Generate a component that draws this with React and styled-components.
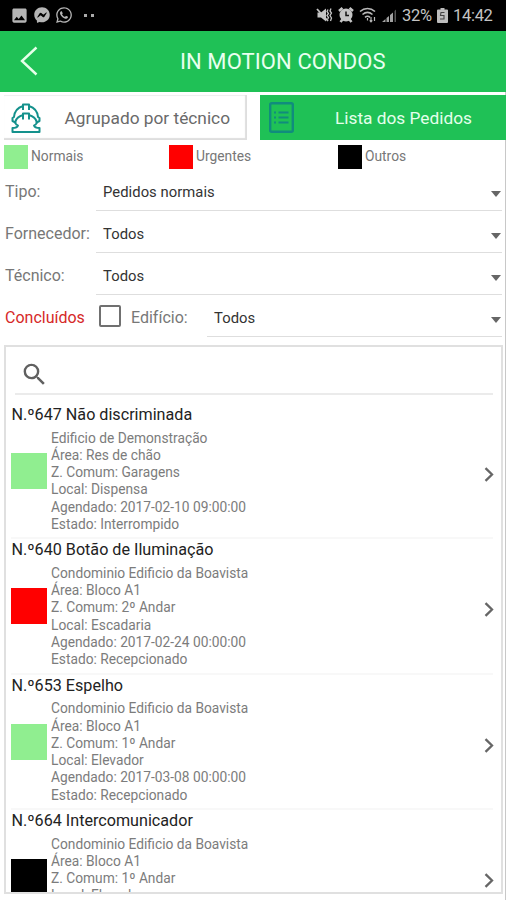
import React from 'react';
import styled, { createGlobalStyle } from 'styled-components';
import { FaFacebookMessenger, FaWhatsapp } from 'react-icons/fa';
import { MdImage, MdSearch } from 'react-icons/md';

const filters = [
  { label: 'Tipo:', value: 'Pedidos normais' },
  { label: 'Fornecedor:', value: 'Todos' },
  { label: 'Técnico:', value: 'Todos' },
];

const requests = [
  {
    title: 'N.º647 Não discriminada',
    color: '#90ee90',
    lines: [
      'Edificio de Demonstração',
      'Área: Res de chão',
      'Z. Comum: Garagens',
      'Local: Dispensa',
      'Agendado: 2017-02-10 09:00:00',
      'Estado: Interrompido',
    ],
  },
  {
    title: 'N.º640 Botão de Iluminação',
    color: '#ff0000',
    lines: [
      'Condominio Edificio da Boavista',
      'Área: Bloco A1',
      'Z. Comum: 2º Andar',
      'Local: Escadaria',
      'Agendado: 2017-02-24 00:00:00',
      'Estado: Recepcionado',
    ],
  },
  {
    title: 'N.º653 Espelho',
    color: '#90ee90',
    lines: [
      'Condominio Edificio da Boavista',
      'Área: Bloco A1',
      'Z. Comum: 1º Andar',
      'Local: Elevador',
      'Agendado: 2017-03-08 00:00:00',
      'Estado: Recepcionado',
    ],
  },
  {
    title: 'N.º664 Intercomunicador',
    color: '#000000',
    lines: [
      'Condominio Edificio da Boavista',
      'Área: Bloco A1',
      'Z. Comum: 1º Andar',
      'Local: Elevador',
    ],
  },
];

function MuteIcon() {
  return (
    <svg width="17" height="17" viewBox="0 0 17 17" fill="none" stroke="#c4c4c4">
      <path d="M1.500 5.500h3.500l5-4v13l-5-4H1.500z" fill="#c4c4c4" stroke="none" />
      <path d="M1 2l11 12" strokeWidth="1.800" />
      <path d="M12 2.500l-1 2 1.500 2-1.500 2 1.500 2-1 2M15 1.500l-1 2.500 1.500 2-1.500 2.500 1.500 2.500-1 3" strokeWidth="1.300" />
    </svg>
  );
}

function AlarmIcon() {
  return (
    <svg width="16" height="16" viewBox="0 0 16 16">
      <path d="M1 4l3.500-3M15 4l-3.500-3M2.500 15l2-2.500M13.500 15l-2-2.500" stroke="#c4c4c4" strokeWidth="2.600" />
      <circle cx="8" cy="8" r="6.500" fill="#c4c4c4" />
      <path d="M8 4.500V8.500h3" fill="none" stroke="#111" strokeWidth="1.500" />
    </svg>
  );
}

function WifiIcon() {
  return (
    <svg width="18" height="16" viewBox="0 0 18 16" fill="none" stroke="#b8b8b8" strokeWidth="1.600">
      <path d="M1 4.500c4.500-4 10.500-4 15 0M3.500 7.500c3-2.500 7-2.500 10 0M6 10.300c1.600-1.300 3.500-1.300 5 0" />
      <path d="M8.500 11v2.500M12 10v4.500M10.700 13.300l1.300 1.500 1.300-1.500M15.500 14v-4" strokeWidth="1.200" />
    </svg>
  );
}

function SignalIcon() {
  return (
    <svg width="15" height="15" viewBox="0 0 15 15">
      <path d="M0 14l3.500-3v3zM4.500 10l2.500-2v6H4.500zM8 7l3-2.500V14H8z" fill="#a2a2a2" />
      <path d="M12.500 3l1.500-1.500V14h-1.500z" fill="#555" />
    </svg>
  );
}

function BatteryIcon() {
  return (
    <svg width="11" height="15" viewBox="0 0 11 15">
      <path d="M3.500 0h4v1.500H10a1 1 0 0 1 1 1V14a1 1 0 0 1-1 1H1a1 1 0 0 1-1-1V2.500a1 1 0 0 1 1-1h2.500z" fill="#bdbdbd" />
      <path d="M7.500 4.500H4l-.5 3h3.500v3.500H3" fill="none" stroke="#444" strokeWidth="1.100" />
    </svg>
  );
}

function HelmetIcon() {
  return (
    <svg width="32" height="32" viewBox="0 0 32 32" fill="none" stroke="#14918c" strokeWidth="2" strokeLinejoin="round">
      {/* outer dome, inner dome, then the brim */}
      <path d="M5.500 20.500L2.500 19v-3l1.500-1C4.500 9.500 8 5.500 13 4V2.500h6V4c5 1.500 8.500 5.500 9 11l1.500 1v3l-3 1.500" />
      <path d="M13 4v4M19 4v4" />
      <path d="M5.500 22v-2.500c1-3.500 4-5.500 7.500-6.500v-1.500h6V13c3.500 1 6.500 3 7.500 6.500V22" />
      <path d="M13 13v4.500M19 13v4.500" />
      <path d="M5.500 22l2.500 1.500c-.5 1.500-2 2.500-5.500 2.500v4h27v-4c-3.500 0-5-1-5.500-2.500l2.500-1.500" />
    </svg>
  );
}

function ListIcon() {
  return (
    <svg width="25" height="31" viewBox="0 0 25 31" fill="none" stroke="#108c7d">
      <rect x="1.200" y="1.200" width="22.600" height="28.600" rx="1.500" strokeWidth="2.400" />
      <path d="M9.500 10.500H19.500M9.500 15.500H19.500M9.500 20.500H19.500" strokeWidth="2" />
      <path d="M5 10.500h2M5 15.500h2M5 20.500h2" strokeWidth="2" />
    </svg>
  );
}

function App() {
  return (
    <Screen>
      <GlobalStyle />
      <StatusBar>
        <StatusBar.Group $gap="5px">
          <MdImage size={19} />
          <FaFacebookMessenger size={16} />
          <FaWhatsapp size={18} />
          <StatusBar.Dots><i /><i /></StatusBar.Dots>
        </StatusBar.Group>
        <StatusBar.Group $gap="5px">
          <MuteIcon />
          <AlarmIcon />
          <WifiIcon />
          <SignalIcon />
          <StatusBar.Text $width="30px">32%</StatusBar.Text>
          <BatteryIcon />
          <StatusBar.Text $width="41px">14:42</StatusBar.Text>
        </StatusBar.Group>
      </StatusBar>

      <Header>
        <svg width="18" height="30" viewBox="0 0 18 30" fill="none" stroke="#e6ffe9" strokeWidth="2.400">
          <path d="M16.500 1.500L2 15l14.500 13.500" />
        </svg>
        <Header.Title>IN MOTION CONDOS</Header.Title>
      </Header>

      <Content>
        <Tabs>
          <Tab>
            <HelmetIcon />
            <Tab.Label>Agrupado por técnico</Tab.Label>
          </Tab>
          <Tab $active>
            <ListIcon />
            <Tab.Label>Lista dos Pedidos</Tab.Label>
          </Tab>
        </Tabs>

        <Legend>
          <Legend.Item><Swatch $color="#90ee90" $size={24} />Normais</Legend.Item>
          <Legend.Item><Swatch $color="#ff0000" $size={24} />Urgentes</Legend.Item>
          <Legend.Item><Swatch $color="#000000" $size={24} />Outros</Legend.Item>
        </Legend>

        {filters.map(({ label, value }) => (
          <FilterRow key={label}>
            <FilterRow.Label>{label}</FilterRow.Label>
            <Select>
              {value}
              <Select.Arrow />
            </Select>
          </FilterRow>
        ))}
        <FilterRow>
          <FilterRow.Done>Concluídos</FilterRow.Done>
          <Checkbox />
          <FilterRow.Building>Edifício:</FilterRow.Building>
          <Select>
            Todos
            <Select.Arrow />
          </Select>
        </FilterRow>

        <RequestList>
          <SearchBar><MdSearch size={29} /></SearchBar>
          {requests.map(({ title, color, lines }) => (
            <Request key={title}>
              <Request.Title>{title}</Request.Title>
              <Request.Body>
                <Swatch $color={color} $size={36} />
                <Request.Lines>
                  {lines.map((line) => <p key={line}>{line}</p>)}
                </Request.Lines>
                <svg width="10" height="15" viewBox="0 0 10 15" fill="none" stroke="#666" strokeWidth="2.300">
                  <path d="M1.500 1.200L8 7.500l-6.500 6.300" />
                </svg>
              </Request.Body>
            </Request>
          ))}
        </RequestList>
      </Content>
    </Screen>
  );
}

const GlobalStyle = createGlobalStyle`
  * {
    box-sizing: border-box;
  }

  body {
    margin: 0;
    background: #fff;
    font-family: Roboto, "Liberation Sans", sans-serif;
  }

  p, h1, h2 {
    margin: 0;
    font-weight: 400;
  }

  svg {
    flex-shrink: 0;
  }
`;

const Screen = styled.div`
  width: 506px;
  height: 900px;
  overflow: hidden;
  display: flex;
  flex-direction: column;
`;

const StatusBar = styled.div`
  height: 30.5px;
  flex-shrink: 0;
  padding: 0 12px 0 10px;
  background: #000;
  color: #b5b5b5;
  display: flex;
  align-items: center;
  justify-content: space-between;
`;

StatusBar.Group = styled.div`
  display: flex;
  align-items: center;
  gap: ${({ $gap }) => $gap};
`;

StatusBar.Dots = styled.div`
  display: flex;
  gap: 4px;
  margin-left: 6px;

  i {
    width: 3px;
    height: 3px;
    background: #aaa;
  }
`;

StatusBar.Text = styled.span`
  width: ${({ $width }) => $width};
  white-space: nowrap;
  font-size: 16.5px;
  letter-spacing: -0.3px;
  color: #c4c4c4;
`;

const Header = styled.header`
  height: 61px;
  flex-shrink: 0;
  padding-left: 20px;
  background: #1fc156;
  display: flex;
  align-items: center;
`;

Header.Title = styled.h1`
  flex: 1;
  padding-left: 142px;
  font-size: 22px;
  letter-spacing: 0.08px;
  color: #e9fff0;
`;

const Content = styled.main`
  flex: 1;
  min-height: 0;
  padding: 3.5px 0 6px 4px;
  border-right: 1px solid #c8c8c8;
  display: flex;
  flex-direction: column;
`;

const Tabs = styled.div`
  height: 45px;
  flex-shrink: 0;
  display: grid;
  grid-template-columns: 243px 1fr;
  gap: 13px;
  margin-right: -1px;
`;

const Tab = styled.div`
  display: flex;
  align-items: center;
  justify-content: space-between;
  padding: ${({ $active }) => ($active ? '0 34px 0 9px' : '0 17px 0 6px')};
  background: ${({ $active }) => ($active ? '#1fc156' : '#fff')};
  color: ${({ $active }) => ($active ? '#e4ffeb' : '#6a6a6a')};
  box-shadow: ${({ $active }) => ($active ? 'none' : 'inset -2px -2px 1px #dedede, inset 0 1px 1px #eee')};
`;

Tab.Label = styled.span`
  font-size: 17.3px;
  white-space: nowrap;
`;

const Legend = styled.div`
  height: 29px;
  flex-shrink: 0;
  padding-top: 5px;
  display: grid;
  grid-template-columns: 165px 169px 1fr;
`;

Legend.Item = styled.div`
  display: flex;
  gap: 3px;
  font-size: 13.8px;
  line-height: 23px;
  color: #777;
`;

const Swatch = styled.div`
  width: ${({ $size }) => $size}px;
  height: ${({ $size }) => $size}px;
  flex-shrink: 0;
  background: ${({ $color }) => $color};
`;

const FilterRow = styled.div`
  height: 42px;
  flex-shrink: 0;
  padding-right: 3px;
  display: flex;
  align-items: center;
  font-size: 16px;
  line-height: 20px;
`;

FilterRow.Label = styled.span`
  width: 92px;
  padding: 3px 0 0 1px;
  color: #777;
`;

FilterRow.Done = styled.span`
  width: 95px;
  padding: 3px 0 0 1px;
  color: #d62828;
`;

FilterRow.Building = styled.span`
  width: 76px;
  padding-top: 3px;
  color: #777;
`;

const Checkbox = styled.div`
  width: 22px;
  height: 22px;
  margin: 0 10px 0 0;
  border: 2px solid #707070;
  border-radius: 2px;
`;

const Select = styled.div`
  flex: 1;
  height: 42px;
  padding: 5px 0 0 7px;
  border-bottom: 1.500px solid #dedede;
  display: flex;
  align-items: center;
  justify-content: space-between;
  font-size: 14.8px;
  letter-spacing: 0.05px;
  color: #333;
`;

Select.Arrow = styled.i`
  margin: 3px 1px 0 0;
  border: 5px solid transparent;
  border-top: 6px solid #666;
  border-bottom: 0;
`;

const RequestList = styled.section`
  flex: 1;
  min-height: 0;
  margin: 8px 2px 0 0;
  padding: 0 8px 0 5px;
  border: 2px solid #e0e0e0;
  overflow: hidden;
`;

const SearchBar = styled.div`
  height: 48px;
  margin: 0 0 9px 4px;
  padding: 13px 0 0 5px;
  border-bottom: 2px solid #ebebeb;
  color: #606060;
`;

const Request = styled.article`
  height: 135.3px;
  border-bottom: 2px solid #f8f8f8;
`;

Request.Title = styled.h2`
  height: 25.7px;
  line-height: 22px;
  padding-left: 0.5px;
  font-size: 16.15px;
  color: #222;
`;

Request.Body = styled.div`
  height: 103.5px;
  display: grid;
  grid-template-columns: 36px 1fr 10px;
  column-gap: 4px;
  align-items: center;

  > ${Swatch} {
    margin-top: -21px;
  }

  > svg {
    margin: -14px 0 0 1px;
  }
`;

Request.Lines = styled.div`
  align-self: start;
  font-size: 13.75px;
  line-height: 17.25px;
  color: #7c7c7c;
`;

export default App;
